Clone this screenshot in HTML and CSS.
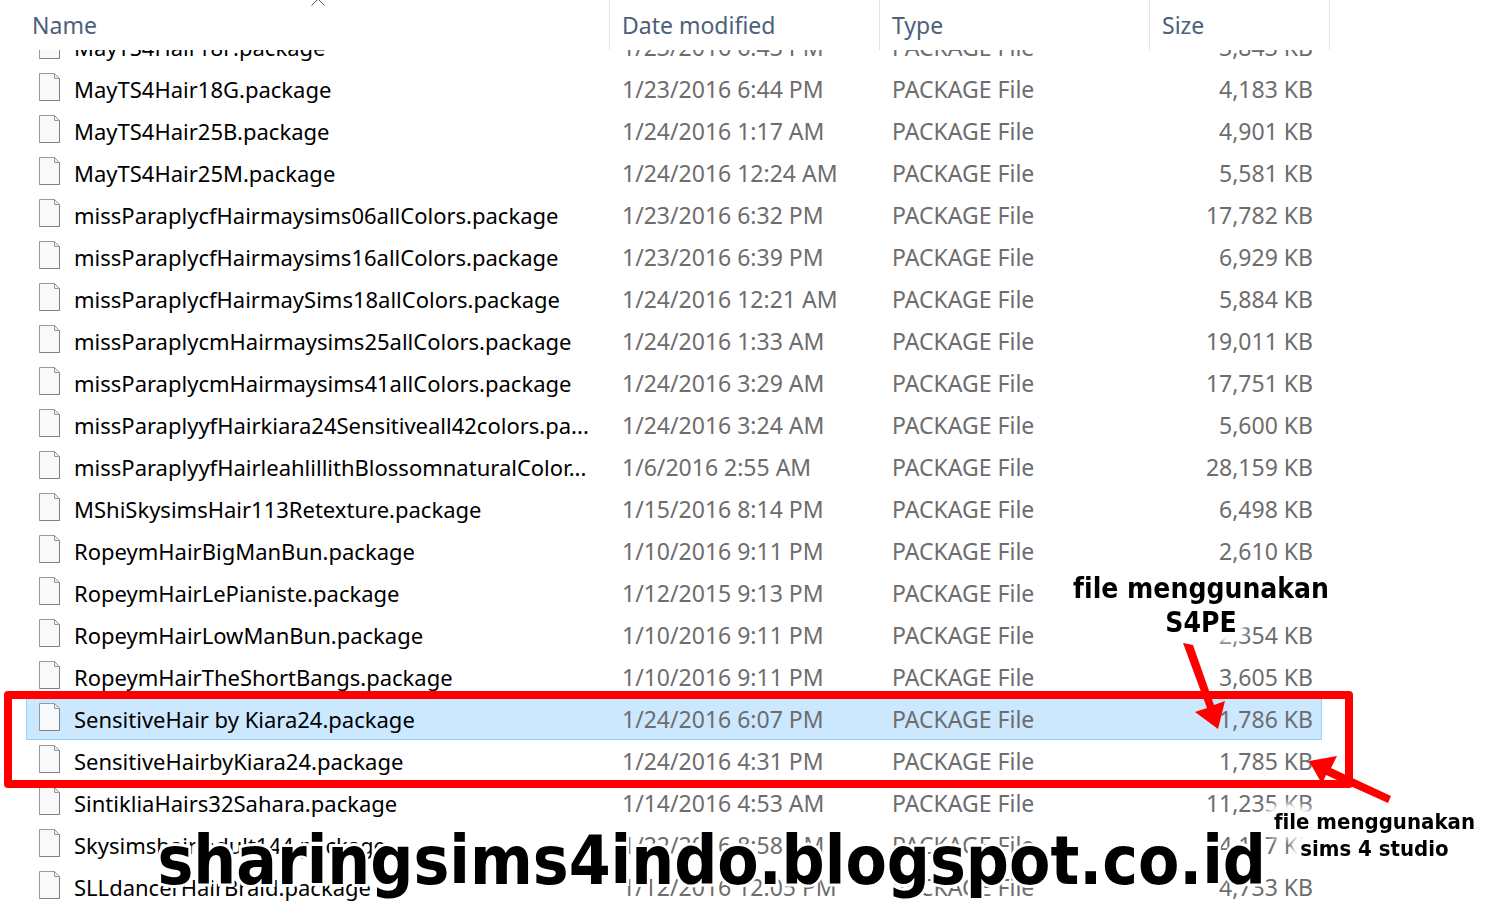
FILE: index.html
```html
<!DOCTYPE html>
<html lang="id">
<head>
    <meta charset="UTF-8">
    <meta name="viewport" content="width=device-width, initial-scale=1.0">
    <title>Package files</title>
    <link rel="stylesheet" href="styles.css">
</head>
<body class="body">
    <svg class="sprite" aria-hidden="true">
        <symbol id="file" viewBox="0 0 21 28">
            <path d="M.5 .5H15.5L20.5 5.5V27.5H.5Z" fill="#f7f9fa" stroke="#999"/>
            <path d="M20.5 5.5V27.5H.5" fill="none" stroke="#808080"/>
            <path d="M15.5 .5V5.5H20.5Z" fill="#eee" stroke="#999"/>
        </symbol>
    </svg>

    <main class="explorer">
        <table class="files">
            <thead class="files__head">
                <tr class="files__row">
                    <th class="files__title">
                        <button class="files__sort">Name</button>
                        <svg class="files__arrow" width="14" height="7" viewBox="0 0 14 7"><path d="M.5 6.5L7 0L13.5 6.5" fill="none" stroke="#555"/></svg>
                    </th>
                    <th class="files__title"><button class="files__sort">Date modified</button></th>
                    <th class="files__title"><button class="files__sort">Type</button></th>
                    <th class="files__title"><button class="files__sort">Size</button></th>
                </tr>
            </thead>
            <tbody class="files__body"></tbody>
        </table>

        <div class="frame"></div>

        <p class="note note_top">file menggunakan<br>S4PE</p>
        <svg class="pointer pointer_top" width="44" height="88" viewBox="0 0 44 88">
            <path d="M2 1L12 3L33 63L44 59L37 87L14 70L26 66Z" fill="#f00"/>
        </svg>

        <p class="note note_bottom">file menggunakan<br>sims 4 studio</p>
        <svg class="pointer pointer_bottom" width="84" height="48" viewBox="0 0 84 48">
            <path d="M1 6L29 1L23 13L83 41L80 48L18 20L14 29Z" fill="#f00"/>
        </svg>

        <p class="watermark">sharingsims4indo.blogspot.co.id</p>
    </main>

    <script>
        const files = [
            ["MayTS4Hair18F.package", "1/23/2016 6:43 PM", "3,843 KB"],
            ["MayTS4Hair18G.package", "1/23/2016 6:44 PM", "4,183 KB"],
            ["MayTS4Hair25B.package", "1/24/2016 1:17 AM", "4,901 KB"],
            ["MayTS4Hair25M.package", "1/24/2016 12:24 AM", "5,581 KB"],
            ["missParaplycfHairmaysims06allColors.package", "1/23/2016 6:32 PM", "17,782 KB"],
            ["missParaplycfHairmaysims16allColors.package", "1/23/2016 6:39 PM", "6,929 KB"],
            ["missParaplycfHairmaySims18allColors.package", "1/24/2016 12:21 AM", "5,884 KB"],
            ["missParaplycmHairmaysims25allColors.package", "1/24/2016 1:33 AM", "19,011 KB"],
            ["missParaplycmHairmaysims41allColors.package", "1/24/2016 3:29 AM", "17,751 KB"],
            ["missParaplyyfHairkiara24Sensitiveall42colors.pa...", "1/24/2016 3:24 AM", "5,600 KB"],
            ["missParaplyyfHairleahlillithBlossomnaturalColor...", "1/6/2016 2:55 AM", "28,159 KB"],
            ["MShiSkysimsHair113Retexture.package", "1/15/2016 8:14 PM", "6,498 KB"],
            ["RopeymHairBigManBun.package", "1/10/2016 9:11 PM", "2,610 KB"],
            ["RopeymHairLePianiste.package", "1/12/2015 9:13 PM", ""],
            ["RopeymHairLowManBun.package", "1/10/2016 9:11 PM", "2,354 KB"],
            ["RopeymHairTheShortBangs.package", "1/10/2016 9:11 PM", "3,605 KB"],
            ["SensitiveHair by Kiara24.package", "1/24/2016 6:07 PM", "1,786 KB"],
            ["SensitiveHairbyKiara24.package", "1/24/2016 4:31 PM", "1,785 KB"],
            ["SintikliaHairs32Sahara.package", "1/14/2016 4:53 AM", "11,235 KB"],
            ["Skysimshair adult144.package", "1/22/2016 8:58 AM", "4,177 KB"],
            ["SLLdancerHairBraid.package", "1/12/2016 12:05 PM", "4,733 KB"],
        ];
        const selected = 16;

        const body = document.querySelector(".files__body");

        files.forEach(([name, date, size], index) => {
            const row = document.createElement("tr");
            row.className = "files__row files__row_item";
            if (index === selected) {
                row.classList.add("files__row_selected");
            }
            row.innerHTML = `
                <td class="files__cell files__cell_name"><svg class="files__icon" width="21" height="28"><use href="#file"/></svg>${name}</td>
                <td class="files__cell">${date}</td>
                <td class="files__cell">PACKAGE File</td>
                <td class="files__cell files__cell_size">${size}</td>`;
            body.append(row);
        });
    </script>
</body>
</html>
```
FILE: styles.css
```css
* {
    box-sizing: border-box;
    margin: 0;
    padding: 0;
}

.body {
    background-color: white;
    font-family: "Noto Sans", "Segoe UI", sans-serif;
    font-size: 23px;
    line-height: 32px;
}

.sprite {
    display: none;
}

.explorer {
    position: relative;
    height: 100vh;
    overflow: hidden;
}

.files,
.files__head,
.files__body {
    display: block;
}

.files {
    padding: 0 179px 0 26px;
}

.files__row {
    display: grid;
    grid-template-columns: minmax(0, 1fr) 270px 270px 180px;
}

/* the list is scrolled a little under the header */
.files__head {
    position: relative;
    z-index: 1;
    background-color: white;
}

.files__body {
    margin-top: -24px;
}

.files__title {
    position: relative;
    display: flex;
    height: 50px;
    border-right: 1px solid #e5e5e5;
    font-weight: normal;
}

.files__sort {
    flex: 1;
    padding: 0 0 0 12px;
    border: none;
    background: none;
    color: #4c607a;
    font: inherit;
    text-align: left;
}

.files__title:first-child .files__sort {
    padding-left: 6px;
}

.files__arrow {
    position: absolute;
    top: 0;
    left: 50%;
    transform: translate(-50%, -1px);
}

.files__row_item {
    grid-template-columns: minmax(0, 1fr) 270px 270px 172px;
    align-items: center;
    height: 42px;
    margin-right: 8px;
    border: 1px solid transparent;
}

.files__row_selected {
    border-color: #99d1ff;
    background-color: #cce8ff;
}

.files__cell {
    padding-left: 13px;
    color: #6d6d6d;
    white-space: nowrap;
}

.files__cell_name {
    display: flex;
    align-items: center;
    gap: 14px;
    padding-left: 12px;
    color: black;
    font-size: 22px;
}

.files__icon {
    flex: none;
    margin-bottom: 4px;
}

.files__cell_size {
    padding-right: 8px;
    text-align: right;
}

.frame {
    position: absolute;
    top: 691px;
    left: 4px;
    right: 156px;
    height: 97px;
    border: 8px solid #f00;
    border-radius: 4px;
}

.note,
.watermark {
    position: absolute;
    font-family: "DejaVu Sans Condensed", "DejaVu Sans", Verdana, sans-serif;
    font-stretch: condensed;
    font-variant-ligatures: none;
    font-weight: bold;
    text-align: center;
    white-space: nowrap;
    paint-order: stroke fill;
    -webkit-text-stroke: 6px white;
}

.note {
    filter: drop-shadow(0 0 3px white) drop-shadow(0 0 3px white) drop-shadow(0 0 3px white) drop-shadow(0 0 3px white);
}

.note_top {
    top: 572px;
    right: 180px;
    font-size: 28px;
    line-height: 34px;
}

.note_bottom {
    top: 808px;
    right: 34px;
    font-size: 22px;
    line-height: 27px;
}

.pointer {
    position: absolute;
}

.pointer_top {
    top: 642px;
    right: 284px;
}

.pointer_bottom {
    top: 755px;
    right: 117px;
}

.watermark {
    top: 821px;
    right: 243px;
    font-size: 67px;
    line-height: 80px;
}
```
